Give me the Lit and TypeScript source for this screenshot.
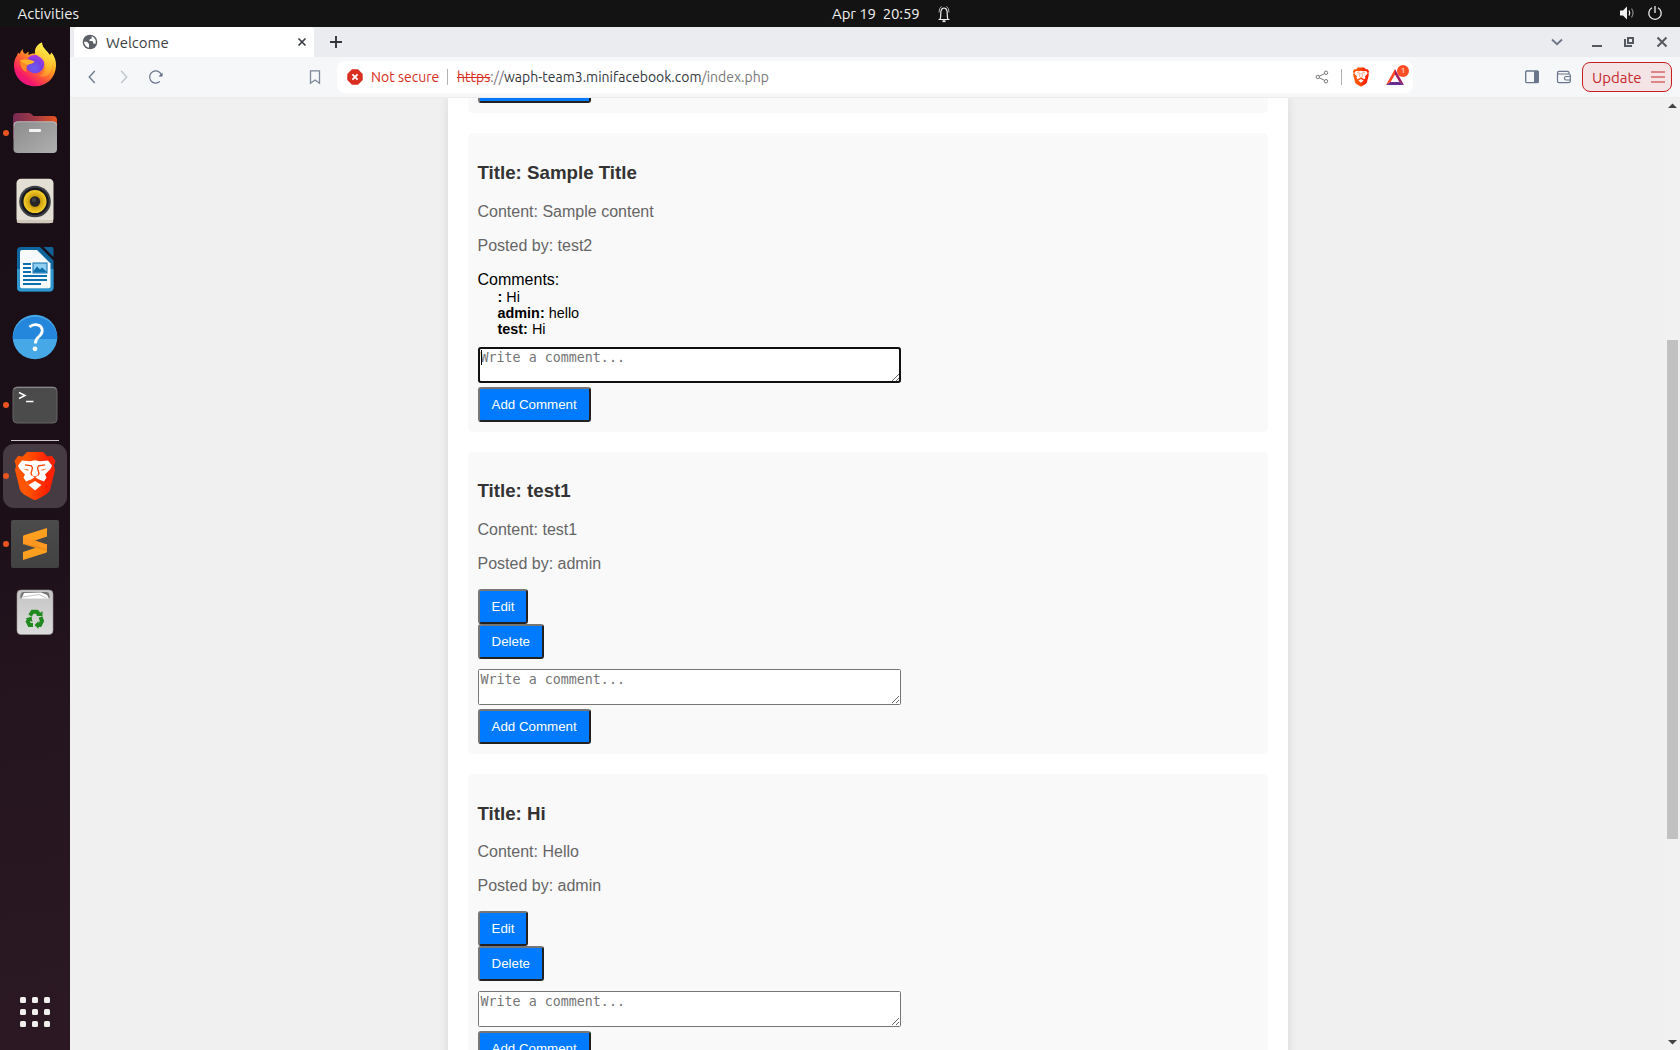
import { LitElement, html, svg, css, nothing } from "lit";
import { customElement, property } from "lit/decorators.js";

interface Comment { author: string; text: string; }
interface Post {
  title: string;
  content: string;
  author: string;
  own?: boolean;
  focused?: boolean;
  comments?: Comment[];
}

const POSTS: Post[] = [
  {
    title: "Sample Title", content: "Sample content", author: "test2", focused: true,
    comments: [
      { author: "", text: "Hi" },
      { author: "admin", text: "hello" },
      { author: "test", text: "Hi" },
    ],
  },
  { title: "test1", content: "test1", author: "admin", own: true },
  { title: "Hi", content: "Hello", author: "admin", own: true },
];

const BRAVE_SHIELD = "M24 8 H40 L44.5 12.500 L49 12 L52.500 17 L51 21.500 L52 26 L47 46 Q46 48.500 43 50.500 L34 55.500 Q32 56.500 30 55.500 L21 50.500 Q18 48.500 17 46 L12 26 L13 21.500 L11.500 17 L15 12 L19.500 12.500 Z";
const BRAVE_FACE = "M19 16.500 L27 17.200 L32 16.200 L37 17.200 L45 16.500 L49 21.500 L47.500 25 L42 30.500 L43.500 33.500 L41 37.500 L36 35.500 L32 33.300 L28 35.500 L23 37.500 L20.500 33.500 L22 30.500 L16.500 25 L15 21.500 Z";
const BRAVE_CHIN = "M25.500 41 L32 37 L38.500 41 L32 46.500 Z";
const BRAVE_EYES = "M22 20.800 L28.500 21.800 L29.500 24 L28 29.500 L29 31.500 M42 20.800 L35.500 21.800 L34.500 24 L36 29.500 L35 31.500";

const braveLogo = (id: string) => svg`
  <defs><linearGradient id=${id}><stop offset=".3" stop-color="#ff5500"/><stop offset=".8" stop-color="#ff2000"/></linearGradient></defs>
  <path d=${BRAVE_SHIELD} fill="url(#${id})"/>
  <path d=${BRAVE_FACE} fill="#fff"/>
  <path d=${BRAVE_CHIN} fill="#fff"/>
  <path d=${BRAVE_EYES} fill="none" stroke="#ff4100" stroke-width="1.300"/>
  <path d="M20 24.500 L26.500 26 L24 26.500 Z M44 24.500 L37.500 26 L40 26.500 Z M28.500 31 L32 32.500 L35.500 31 L32 34Z" fill="#ff4100"/>`;

const ICONS: Record<string, unknown> = {
  firefox: svg`
    <defs>
      <linearGradient id="ff1" x1=".85" y1=".1" x2=".2" y2=".95"><stop offset=".05" stop-color="#fff44f"/><stop offset=".35" stop-color="#ffa41f"/><stop offset=".6" stop-color="#ff5a36"/><stop offset=".85" stop-color="#f5196a"/><stop offset="1" stop-color="#e31587"/></linearGradient>
      <radialGradient id="ff2" cx=".45" cy=".7" r=".7"><stop offset="0" stop-color="#6a5cf0"/><stop offset=".6" stop-color="#7a3fe0"/><stop offset="1" stop-color="#b833e1"/></radialGradient>
      <linearGradient id="ff3" x1=".6" y1="0" x2=".4" y2="1"><stop offset="0" stop-color="#fff14a"/><stop offset="1" stop-color="#ffb02a" stop-opacity=".4"/></linearGradient>
    </defs>
    <path d="M32 53.300 C20 53.300 11 44 11 32.500 C11 28 12.500 24.500 14 22.500 L15 19.500 L16.500 21 C17.500 19 18 17.500 20 16 C19.500 18.500 20.500 20 22.500 21 L25.500 18.500 L25.500 22 C27 21 29.500 20.300 32 20.500 C31.500 15 35 11 39 9.500 C39 14 42 16 44.500 19 L47 22 L48.500 19.500 C52 24 53.200 28 53 33 C52.500 45 43.500 53.300 32 53.300 Z" fill="url(#ff1)"/>
    <circle cx="32" cy="31" r="9.300" fill="url(#ff2)"/>
    <path d="M39 9.500 C39 14 42 16 44.500 19 C50 26 51 36 45 42 C41 45 38 44 36 42.500 C42 41 43 35 41.500 30 C40 24.500 33.500 23 32 20.500 C31.500 15 35 11 39 9.500Z" fill="url(#ff3)"/>
    <path d="M17 27.500 C19 26 23 26.300 25.500 26.300 L31.500 28.500 C30 31 26.500 30.500 24.500 32 C23.500 34 23 36 23.500 39 C19 37 17 33 17 27.500Z" fill="#ff8a26"/>
    <path d="M31.500 28.500 C29 31.500 26.500 30.300 24.500 32 C23 31 19 29 17 27.500 C20 26.500 26 26 31.500 28.500Z" fill="#ffb32c"/>`,
  files: svg`
    <defs><linearGradient id="fl1"><stop offset="0" stop-color="#772953"/><stop offset=".5" stop-color="#a13a45"/><stop offset="1" stop-color="#e95420"/></linearGradient>
    <linearGradient id="fl2" x1="0" y1="0" x2="1" y2="1"><stop offset="0" stop-color="#8b8b8b"/><stop offset="1" stop-color="#b0b0b0"/></linearGradient></defs>
    <path d="M10 16 Q10 12 14 12 H26 Q28 12 29 13.500 L30.500 15 H50 Q54 15 54 19 V38 H10 Z" fill="url(#fl1)"/>
    <rect x="10.500" y="20.500" width="43.500" height="31.500" rx="4" fill="url(#fl2)"/>
    <path d="M11 24.500 Q11 20.800 14.500 20.800 H50 Q53.600 20.800 53.600 24.500" fill="none" stroke="#c4c4c4" stroke-width=".8"/>
    <rect x="26" y="28" width="12" height="3" rx="1" fill="#f4f4f4"/>`,
  rhythmbox: svg`
    <defs><radialGradient id="rb"><stop offset=".45" stop-color="#c99b0c"/><stop offset="1" stop-color="#f7cf2c"/></radialGradient></defs>
    <rect x="13.500" y="9.700" width="37" height="44.600" rx="4.500" fill="#e4dfd5"/>
    <rect x="13.800" y="51" width="36.400" height="3" rx="1.500" fill="#cfc8bb"/>
    <circle cx="32" cy="32.500" r="15.800" fill="#3d4046"/><circle cx="32" cy="32.500" r="13.800" fill="#17191f"/>
    <circle cx="32" cy="32.500" r="11.500" fill="url(#rb)"/><circle cx="32" cy="32.500" r="5.200" fill="#252528"/>
    <circle cx="31" cy="31" r="2" fill="#444"/>`,
  writer: svg`
    <path d="M18 10 H37 L50.500 23.500 V50.500 Q50.500 54.500 46.500 54.500 H18 Q14 54.500 14 50.500 V14 Q14 10 18 10Z" fill="#0f669f"/>
    <path d="M14 32 H50.500 V50.500 Q50.500 54.500 46.500 54.500 H18 Q14 54.500 14 50.500 Z" fill="#2e96cc"/>
    <path d="M40.500 10 H49 Q50.500 10 50.500 12 V20 Z" fill="#126295"/>
    <path d="M19 13 H34 L47.500 26.500 V49.500 Q47.500 51.300 45.500 51.300 H19 Q17 51.300 17 49.500 V15 Q17 13 19 13Z" fill="#f8fbfd"/>
    <path d="M20 27 H28 M20 31 H28 M20 35 H28 M20 39 H44 M20 43 H44 M20 47 H38" stroke="#0e6fae" stroke-width="1.800"/>
    <rect x="30" y="26" width="14" height="10" fill="#8fd0f2" stroke="#0e6fae" stroke-width="1"/>
    <path d="M30.500 35.500 V34 L34 29.500 L37 32.500 L39 30.500 L43.500 34.500 V35.500Z" fill="#0e6fae"/>`,
  help: svg`
    <circle cx="32" cy="32" r="22.300" fill="#46a8e6"/>
    <path d="M9.700 34 A22.300 22.300 0 1 1 54.300 34 Z" fill="#2487dc"/>
    <path d="M26.500 22 C30 18.500 39 18.500 39.200 25.500 C39.300 32 32.300 31 32.300 38.500" fill="none" stroke="#fff" stroke-width="2.800"/>
    <circle cx="32" cy="43.800" r="2.400" fill="#fff"/>`,
  terminal: svg`
    <rect x="10" y="14" width="44" height="36" rx="4" fill="#4b4b4b" stroke="#666" stroke-width="1"/>
    <path d="M11 16.500 Q11.500 14.500 14 14.500 H50 Q52.500 14.500 53 16.500" fill="none" stroke="#8a8a8a"/>
    <path d="M16 19.500 L22 22.500 L16 25.500" fill="none" stroke="#fff" stroke-width="1.500"/><path d="M23 28.500 H30.500" stroke="#fff" stroke-width="1.500"/>`,
  brave: braveLogo("bravedock"),
  sublime: svg`
    <defs><linearGradient id="sb" x1="0" y1="0" x2="0" y2="1"><stop offset="0" stop-color="#4b4b4b"/><stop offset="1" stop-color="#424242"/></linearGradient></defs>
    <rect x="8" y="8" width="48" height="48" rx="2" fill="url(#sb)"/>
    <path d="M20 40 L44 32 V39.500 Q44 40.300 43 40.700 L20 48 Z" fill="#ff9f1f"/>
    <path d="M20 24.500 L44 33 V39 L21 31.800 Q20 31.300 20 30.500Z" fill="#f7931e"/>
    <path d="M20 24.500 Q20 23.500 21 23.200 L44 16 V24.500 L20 32.500Z" fill="#ff9f1f"/>
    <path d="M20 30 L44 33 V39 L32 35.800 L21.500 32.500Z" fill="#f0901c"/>
    <path d="M20 24.500 L32 28.500 L44 32.500 V37 L32 33.500 L21 31.500Z" fill="#ff9822"/>`,
  trash: svg`
    <defs><linearGradient id="tr" x1="0" y1="0" x2="0" y2="1"><stop offset="0" stop-color="#c4c4c4"/><stop offset="1" stop-color="#dcdcdc"/></linearGradient></defs>
    <rect x="14" y="10" width="36" height="44.500" rx="4" fill="url(#tr)" stroke="#999" stroke-width=".6"/>
    <path d="M17.500 18.500 Q17 12 20 12 H44 Q47 12 46.500 18.500 Z" fill="#777"/>
    <path d="M18.500 18.800 L21 13 L38 12.500 L44 15 L46 18.800Z" fill="#fff"/>
    <path d="M20 17 L36 14.500 L43.500 18" fill="none" stroke="#aaa" stroke-width=".7"/>
    <g fill="none" stroke="#218a1e" stroke-width="4">
      <path d="M27 35.500 L29.500 31.800 H34 L36 34.500"/>
      <path d="M37.500 37 L39 41 L37 45 H34.500"/>
      <path d="M30 45 H26.500 L24.800 41.500 L26 39.500"/>
    </g>
    <path d="M33 36 H39.500 V31Z M35.500 41 V49 L31.500 45Z M22.500 38.500 L28.500 36.500 L29.500 42Z" fill="#218a1e"/>`,
};

const DOCK = [
  { id: "firefox" }, { id: "files", running: true }, { id: "rhythmbox" },
  { id: "writer" }, { id: "help" }, { id: "terminal", running: true },
];
const DOCK_RUNNING = [
  { id: "brave", running: true, active: true }, { id: "sublime", running: true }, { id: "trash" },
];

@customElement("desktop-topbar")
class DesktopTopbar extends LitElement {
  static styles = css`
    :host { display: grid; grid-template-columns: 832px auto 1fr; align-items: center; height: 27px; background: #131313; color: #f0f0f0;
      font: 15px "Ubuntu", "Noto Sans", sans-serif; }
    .activities { padding-left: 17.500px; }
    .clock { display: flex; align-items: center; gap: 17px; white-space: pre; }
    .time { width: 88px; letter-spacing: -0.1px; margin-top: -1px; }
    .tray { display: flex; justify-content: flex-end; gap: 12px; padding-right: 17px; margin-top: -1px; }
    svg { display: block; }
  `;
  render() {
    return html`
      <span class="activities">Activities</span>
      <div class="clock"><span class="time">Apr 19  20:59</span>
        <svg width="14" height="18" viewBox="1 0 14 18" fill="none" stroke="#eee" stroke-width="1.200">
          <path d="M2.500 14.500 H13.500 M4 14.500 C5 12.500 4.500 9 5 6 C5.500 3.500 6.500 3 8 3 C9.500 3 10.500 3.500 11 6 C11.500 9 11 12.500 12 14.500"/>
          <path d="M6.500 16.200 H9.500" stroke-width="1.800"/>
          <path d="M3 7.500 Q3 3 5.500 1.300 M13 7.500 Q13 3 10.500 1.300" stroke="#aaa" stroke-width="1"/>
        </svg>
      </div>
      <div class="tray">
        <svg width="16" height="16" viewBox="0 0 16 16"><path d="M1 5.500 H4 L8 1.500 V14.500 L4 10.500 H1Z" fill="#f2f2f2"/><path d="M10 5.500 Q11.500 8 10 10.500" fill="none" stroke="#f2f2f2" stroke-width="1.300"/><path d="M12.500 3.500 Q15.500 8 12.500 12.500" fill="none" stroke="#888" stroke-width="1.200"/></svg>
        <svg width="16" height="16" viewBox="0 0 16 16" fill="none" stroke="#eee" stroke-width="1.300"><path d="M5 2.800 A6.200 6.200 0 1 0 11 2.800 M8 1 V8"/></svg>
      </div>`;
  }
}

@customElement("app-dock")
class AppDock extends LitElement {
  static styles = css`
    :host { display: flex; flex-direction: column; align-items: center; width: 70px; box-sizing: border-box; padding-top: 6px;
      background: linear-gradient(172deg, #190e16 0%, #1c0f18 45%, #261620 72%, #2b1822 100%); }
    .item { position: relative; width: 64px; height: 64px; margin-bottom: 4px; border-radius: 11px; }
    .active { background: #463b43; }
    .dot { position: absolute; left: 0; top: 29px; width: 6px; height: 6px; border-radius: 50%; background: #e95420; }
    .separator { width: 48px; height: 1px; background: #c9c6c8; margin: -1px 0 3px; }
    svg { display: block; }
    .grid { display: grid; grid-template-columns: repeat(3, 6px); gap: 6px; margin: auto 0 23px; }
    .grid span { height: 6px; border-radius: 1.5px; background: #f2f0ee; }
  `;
  private item(d: { id: string; running?: boolean; active?: boolean }) {
    return html`<div class="item ${d.active ? "active" : ""}">
      <svg width="64" height="64" viewBox="0 0 64 64">${ICONS[d.id]}</svg>
      ${d.running ? html`<span class="dot"></span>` : nothing}
    </div>`;
  }
  render() {
    return html`
      ${DOCK.map((d) => this.item(d))}
      <div class="separator"></div>
      ${DOCK_RUNNING.map((d) => this.item(d))}
      <div class="grid">${Array.from({ length: 9 }, () => html`<span></span>`)}</div>`;
  }
}

@customElement("browser-chrome")
class BrowserChrome extends LitElement {
  static styles = css`
    :host { display: block; font: 15px "Ubuntu", "Noto Sans", sans-serif; color: #3b3e44; }
    svg { display: block; flex: none; }
    .strip { display: flex; align-items: center; height: 30px; padding: 0 11px 0 4px; background: #ebecf0; }
    .tab { display: flex; align-items: center; width: 240px; height: 30px; box-sizing: border-box; padding: 0 7px 0 8px; background: #fff; border-radius: 4px 4px 0 0; }
    .name { flex: 1; padding-left: 8px; }
    .plus { margin-left: 15px; }
    .window { display: flex; align-items: center; margin-left: auto; }
    .window svg + svg { margin-left: 19px; }
    .window svg:nth-child(2) { margin-left: 27px; }
    .window svg:nth-child(3) { margin-left: 18px; }
    .toolbar { display: flex; align-items: center; height: 41px; padding: 0 8px 0 14px; box-sizing: border-box; background: #f6f7f9; border-bottom: 1px solid #ebecef; }
    .nav { display: flex; gap: 16px; }
    .bookmark { margin-left: 144px; }
    .address { display: flex; align-items: center; width: 1076px; height: 32px; margin-left: 15px; padding: 0 6px 0 10px; box-sizing: border-box; background: #fff; border-radius: 8px; font-size: 14px; }
    .warn { color: #d92d20; padding-left: 8px; width: 84px; box-sizing: border-box; white-space: nowrap; }
    .rule { width: 1px; height: 16px; background: #b3b3b3; }
    .url { margin-left: 9px; flex: 1; color: #777; white-space: nowrap; }
    .scheme { color: #d92d20; text-decoration: line-through; }
    .host { color: #33363b; }
    .share { margin-right: 12px; }
    .shield { margin: 0 15px 0 10px; }
    .rewards { position: relative; width: 22px; height: 20px; }
    .badge { position: absolute; left: 12px; top: -2px; width: 12px; height: 12px; border-radius: 50%; background: #ff4d25; color: #fff; font-size: 8px; line-height: 12px; text-align: center; }
    .side { display: flex; gap: 16px; margin-left: auto; margin-right: 10px; }
    .update { display: flex; align-items: center; justify-content: space-between; width: 90px; height: 30px; box-sizing: border-box; padding: 0 6px 0 9px; border: 1px solid #c81e1e; border-radius: 8px; background: #f4e4e5; color: #c5282c; }
  `;
  render() {
    return html`
      <div class="strip">
        <div class="tab">
          <svg width="16" height="16" viewBox="0 0 16 16"><circle cx="8" cy="8" r="7.300" fill="#5c6066"/><path d="M2 7.800 H5 L7 10 V13.800 Q2.500 13 2 7.800Z M7.500 2.300 H10 L9.500 4.500 L7.500 5.500 V7 H10.500 L11.500 9.500 L13.500 9.800 Q14.500 6 12 3.800 L10.500 2.600" fill="#fff"/></svg>
          <span class="name">Welcome</span>
          <svg width="10" height="10" viewBox="0 0 10 10" stroke="#3b3e44" stroke-width="1.700"><path d="M1.500 1.500 L8.500 8.500 M8.500 1.500 L1.500 8.500"/></svg>
        </div>
        <svg class="plus" width="14" height="14" viewBox="0 0 14 14" stroke="#33363b" stroke-width="1.900"><path d="M7 1 V13 M1 7 H13"/></svg>
        <div class="window">
          <svg width="12" height="10" viewBox="0 0 12 10" fill="none" stroke="#6b7485" stroke-width="1.800"><path d="M1 2.500 L6 7.200 L11 2.500"/></svg>
          <svg width="14" height="12" viewBox="0 0 14 12"><path d="M2 10 H12" stroke="#55585e" stroke-width="2"/></svg>
          <svg width="14" height="12" viewBox="0 0 14 12" fill="none" stroke="#55585e" stroke-width="2"><rect x="6" y="2" width="5" height="5"/><path d="M3 3 V10 H10"/></svg>
          <svg width="14" height="12" viewBox="0 0 14 12" stroke="#55585e" stroke-width="2"><path d="M2.500 1.500 L11.500 10.500 M11.500 1.500 L2.500 10.500"/></svg>
        </div>
      </div>
      <div class="toolbar">
        <div class="nav">
          <svg width="16" height="16" viewBox="0 0 16 16" fill="none" stroke="#68758a" stroke-width="1.300"><path d="M10.800 2 L5.200 8 L10.800 14"/></svg>
          <svg width="16" height="16" viewBox="0 0 16 16" fill="none" stroke="#bcc1c9" stroke-width="1.300"><path d="M5.200 2 L10.800 8 L5.200 14"/></svg>
          <svg width="16" height="16" viewBox="0 0 16 16" fill="none" stroke="#68758a" stroke-width="1.200"><path d="M11.800 12.500 A6.100 6.100 0 1 1 13.300 5.500"/><path d="M14.500 3.500 V7.500 H10.500 Z" fill="#5c697e" stroke="none"/></svg>
        </div>
        <svg class="bookmark" width="14" height="16" viewBox="0 0 14 16" fill="none" stroke="#7c8797" stroke-width="1.300"><path d="M2.500 1.800 H11.500 V14.200 L7 11 L2.500 14.200Z"/></svg>
        <div class="address">
          <svg width="16" height="16" viewBox="0 0 16 16"><path d="M5 .3 H11 L15.700 5 V11 L11 15.700 H5 L.3 11 V5Z" fill="#d92d20"/><path d="M5.400 5.400 L10.600 10.600 M10.600 5.400 L5.400 10.600" stroke="#fff" stroke-width="1.900"/></svg>
          <span class="warn">Not secure</span><span class="rule"></span>
          <span class="url"><span class="scheme">https</span>://<span class="host">waph-team3.minifacebook.com</span>/index.php</span>
          <svg class="share" width="14" height="14" viewBox="0 0 14 14" fill="none" stroke="#777" stroke-width="1"><circle cx="2.800" cy="7" r="1.700"/><circle cx="11" cy="2.800" r="1.700"/><circle cx="11" cy="11.200" r="1.700"/><path d="M4.300 6.200 L9.500 3.600 M4.300 7.800 L9.500 10.400"/></svg>
          <span class="rule"></span>
          <svg class="shield" width="18" height="20" viewBox="9 6.500 46 51">${braveLogo("bravebar")}</svg>
          <span class="rewards">
            <svg width="20" height="20" viewBox="0 0 20 20"><path d="M10 2 L1 18 L5.500 15.200 L10 7.500Z" fill="#ff4724"/><path d="M10 2 L19 18 L14.500 15.200 L10 7.500Z" fill="#9e1f63"/><path d="M1 18 H19 L14.500 15 H5.500Z" fill="#662d91"/></svg>
            <span class="badge">1</span>
          </span>
        </div>
        <div class="side">
          <svg width="16" height="16" viewBox="0 0 16 16"><rect x="1.700" y="2" width="12.600" height="11.600" rx="1" fill="none" stroke="#68758a" stroke-width="1.300"/><rect x="10" y="2" width="4.500" height="12" fill="#68758a"/></svg>
          <svg width="16" height="16" viewBox="0 0 16 16" fill="none" stroke="#68758a" stroke-width="1.200"><path d="M13 5 V3.500 Q13 2.300 11.500 2.300 H3 Q1.500 2.300 1.500 4 V12 Q1.500 13.600 3 13.600 H12.500 Q14.300 13.600 14.300 12 V6.500 Q14.300 5 12.500 5 H3 Q1.500 5 1.500 3.800"/><path d="M14.300 7.500 H10 Q8.500 7.500 8.500 9.200 Q8.500 11 10 11 H14.300"/></svg>
        </div>
        <div class="update"><span>Update</span>
          <svg width="14" height="14" viewBox="0 0 14 14" stroke="#c5282c" stroke-width="1.200"><path d="M0 2 H14 M0 7 H14 M0 12 H14"/></svg>
        </div>
      </div>`;
  }
}

@customElement("post-card")
class PostCard extends LitElement {
  @property({ attribute: false }) post!: Post;
  static styles = css`
    :host { display: block; box-sizing: border-box; padding: 10px; margin-bottom: 20px; background: #f9f9f9; border-radius: 5px; font: 16px/18px "Liberation Sans", Arial, sans-serif; color: #000; }
    h3 { margin: 18.72px 0; font-size: 18.72px; line-height: 22px; color: #333; }
    p { margin: 16px 0; color: #666; }
    .comment { padding-left: 20px; font-size: 14.4px; line-height: 16px; }
    .actions { display: flex; flex-direction: column; align-items: flex-start; }
    .form { position: relative; margin-top: 10px; }
    textarea { display: block; box-sizing: border-box; width: 423px; height: 36px; margin: 0 0 4px; padding: 2px; border: 1px solid #767676; border-radius: 1.5px; background: #fff; font: 13.333px/15px "DejaVu Sans Mono", monospace; resize: both; overflow: hidden; }
    textarea::placeholder { color: #757575; }
    .focused textarea { outline: 2px solid #101010; outline-offset: -2px; border-radius: 3px; }
    .caret { position: absolute; left: 3px; top: 3px; width: 1px; height: 15px; background: #000; }
    button { display: block; height: 35px; margin: 0; padding: 8px 12px; border: 2px solid; border-color: #767676 #212121 #212121 #767676; border-radius: 3px; background: #007bff; color: #fff; font: 13.333px/15px "Liberation Sans", Arial, sans-serif; }
  `;
  render() {
    const p = this.post;
    return html`
      <h3>Title: ${p.title}</h3>
      <p>Content: ${p.content}</p>
      <p>Posted by: ${p.author}</p>
      ${p.comments ? html`<div>Comments:</div>${p.comments.map((c) => html`<div class="comment"><b>${c.author}:</b> ${c.text}</div>`)}` : nothing}
      ${p.own ? html`<div class="actions"><button>Edit</button><button>Delete</button></div>` : nothing}
      <div class="form ${p.focused ? "focused" : ""}">
        <textarea placeholder="Write a comment..."></textarea>
        ${p.focused ? html`<span class="caret"></span>` : nothing}
        <button>Add Comment</button>
      </div>`;
  }
}

@customElement("app-root")
class AppRoot extends LitElement {
  static styles = css`
    :host { display: grid; grid-template-rows: 27px 1fr; width: 1680px; height: 1050px; overflow: hidden; }
    .desktop { display: grid; grid-template-columns: 70px 1fr; min-height: 0; }
    .browser { display: grid; grid-template-rows: auto 1fr; min-width: 0; min-height: 0; }
    .viewport { display: flex; min-height: 0; overflow: hidden; background: #f0f0f0; }
    .page { display: flex; flex: 1; flex-direction: column; align-items: center; overflow: hidden; }
    .container { flex: none; box-sizing: border-box; width: 840px; min-height: 960px; padding: 0 20px; background: #fff; box-shadow: 0 0 10px rgba(0, 0, 0, 0.1); }
    .previous { display: flex; align-items: flex-end; box-sizing: border-box; height: 15.1px; padding: 0 10px 10px; margin-bottom: 20px; background: #f9f9f9; border-radius: 0 0 5px 5px; }
    .tail { width: 113px; height: 5px; box-sizing: border-box; border: 2px solid #767676; border-top: 0; border-right-color: #212121; border-bottom-color: #212121; border-radius: 0 0 3px 3px; background: #007bff; }
    .scroll { display: flex; flex-direction: column; align-items: center; box-sizing: border-box; width: 15px; background: #f1f1f1; }
    .scroll svg { display: block; margin: 5px 0 0; }
    .thumb { width: 11px; height: 499px; margin-top: 231px; background: #c1c1c1; }
    .scroll .down { margin: auto 0 5px; }
  `;
  render() {
    return html`
      <desktop-topbar></desktop-topbar>
      <div class="desktop">
        <app-dock></app-dock>
        <div class="browser">
          <browser-chrome></browser-chrome>
          <div class="viewport">
            <main class="page">
              <div class="container">
                <div class="previous"><div class="tail"></div></div>
                ${POSTS.map((post) => html`<post-card .post=${post}></post-card>`)}
              </div>
            </main>
            <div class="scroll">
              <svg width="9" height="6" viewBox="0 0 9 6"><path d="M4.500 .5 L9 5 H0Z" fill="#444"/></svg>
              <div class="thumb"></div>
              <svg class="down" width="9" height="6" viewBox="0 0 9 6"><path d="M4.500 5.500 L0 1 H9Z" fill="#444"/></svg>
            </div>
          </div>
        </div>
      </div>`;
  }
}
